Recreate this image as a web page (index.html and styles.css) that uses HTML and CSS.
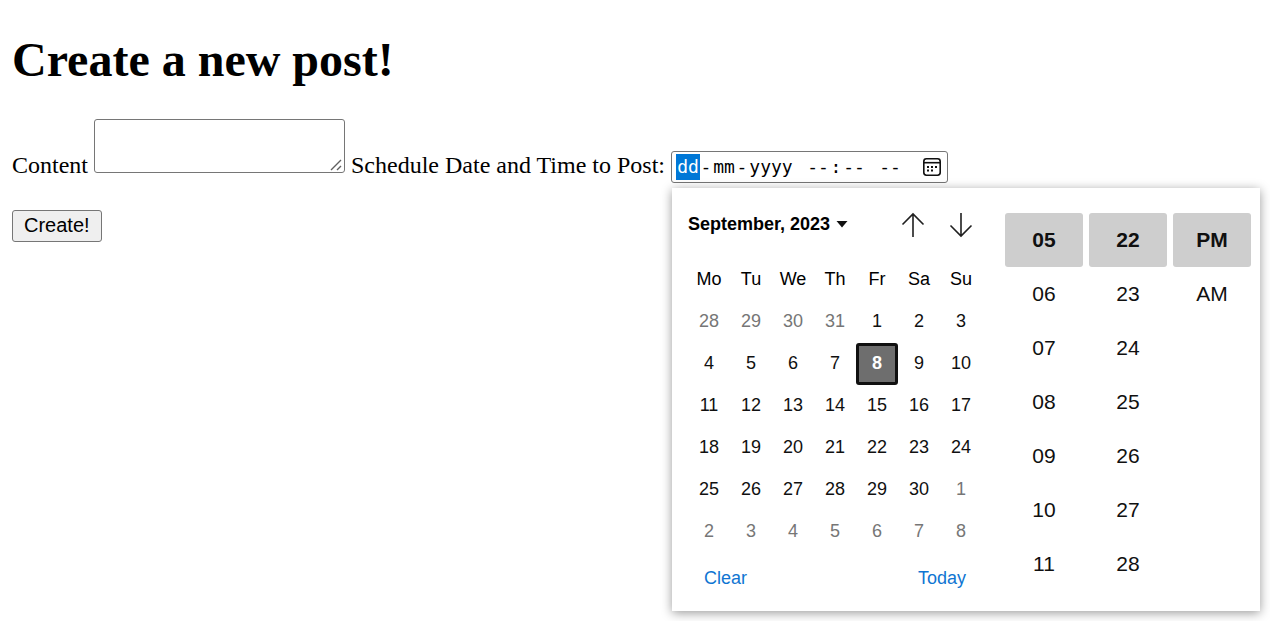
FILE: index.html
```
<!DOCTYPE html>
<html lang="en">
<head>
<meta charset="utf-8">
<title>Create a new post!</title>
<link rel="stylesheet" href="styles.css">
</head>
<body>
<h1>Create a new post!</h1>
<form>
  <div class="fields">
    <label for="content">Content</label>
    <textarea id="content" class="content"></textarea>
    <label for="day">Schedule Date and Time to Post:</label>
    <span class="picker">
      <span class="datetime">
        <input id="day" class="part active" aria-label="Day" value="dd"><span class="sep">-</span><input class="part" aria-label="Month" value="mm"><span class="sep">-</span><input class="part year" aria-label="Year" value="yyyy"><span class="sep"></span><input class="part" aria-label="Hours" value="--"><span class="sep">:</span><input class="part" aria-label="Minutes" value="--"><span class="sep"></span><input class="part" aria-label="AM/PM" value="--">
        <button type="button" class="toggle" aria-label="Show date picker">
          <svg width="20" height="20" viewBox="0 0 20 20" fill="none" stroke="#101010" stroke-width="1.6"><rect x="1.8" y="1.8" width="16.4" height="16.4" rx="2.6"/><path d="M2 5.7h16"/><path d="M5 10h2m2 0h2m2 0h2M5 13.500h2m2 0h2" stroke-width="2"/></svg>
        </button>
      </span>
      <span class="popup">
        <span class="calendar">
          <span class="head">
            <button type="button" class="month">September, 2023 <svg width="12" height="7" viewBox="0 0 12 7"><path d="M.5 0h11L6 6.5z" fill="#101010"/></svg></button>
            <button type="button" class="arrow" aria-label="Previous month"><svg width="24" height="26" viewBox="0 0 24 26" fill="none" stroke="#202020" stroke-width="1.6"><path d="M12 25V2M1.500 12.500 12 2l10.500 10.500"/></svg></button>
            <button type="button" class="arrow" aria-label="Next month"><svg width="24" height="26" viewBox="0 0 24 26" fill="none" stroke="#202020" stroke-width="1.6"><path d="M12 1v23M1.500 13.500 12 24l10.500-10.500"/></svg></button>
          </span>
          <table class="days">
            <thead><tr><th>Mo</th><th>Tu</th><th>We</th><th>Th</th><th>Fr</th><th>Sa</th><th>Su</th></tr></thead>
            <tbody id="weeks"></tbody>
          </table>
          <span class="foot">
            <button type="button" class="link">Clear</button>
            <button type="button" class="link">Today</button>
          </span>
        </span>
        <span class="time">
          <span class="column">
            <button type="button" class="option chosen">05</button><button type="button" class="option">06</button><button type="button" class="option">07</button><button type="button" class="option">08</button><button type="button" class="option">09</button><button type="button" class="option">10</button><button type="button" class="option">11</button>
          </span>
          <span class="column">
            <button type="button" class="option chosen">22</button><button type="button" class="option">23</button><button type="button" class="option">24</button><button type="button" class="option">25</button><button type="button" class="option">26</button><button type="button" class="option">27</button><button type="button" class="option">28</button>
          </span>
          <span class="column">
            <button type="button" class="option chosen">PM</button><button type="button" class="option">AM</button>
          </span>
        </span>
      </span>
    </span>
  </div>
  <button type="button" class="create">Create!</button>
</form>
<script src="calendar.js"></script>
</body>
</html>
```

FILE: styles.css
```
body {
  box-sizing: border-box;
  min-height: 100vh;
  margin: 0;
  padding: 32px 0 0 12px;
  background: #fff;
  color: #000;
  font: 24px "Liberation Serif", "Times New Roman", serif;
}

h1 {
  margin: 0 0 32px;
  font-size: 48px;
  line-height: 55px;
}

button {
  margin: 0;
  padding: 0;
  border: 0;
  background: none;
  color: #101010;
  font: 18px "Liberation Sans", Arial, sans-serif;
}

.fields {
  margin-bottom: 27px;
}

.content {
  box-sizing: border-box;
  width: 251px;
  height: 54px;
  margin: 0;
  border: 1px solid #767676;
  border-radius: 3px;
}

.content::-webkit-resizer {
  background: url("data:image/svg+xml,%3Csvg xmlns='http://www.w3.org/2000/svg' width='15' height='15' viewBox='0 0 15 15'%3E%3Cpath d='M2 13 12 3M8 13l4-4' stroke='%23606060' stroke-width='1.4'/%3E%3C/svg%3E") no-repeat right bottom;
}

.picker {
  display: inline-block;
  position: relative;
}

.datetime {
  display: inline-flex;
  align-items: center;
  box-sizing: border-box;
  height: 32px;
  padding: 0 5px 0 4px;
  border: 1px solid #767676;
  border-radius: 3px;
  font: 18px "DejaVu Sans Mono", monospace;
}

.part {
  box-sizing: border-box;
  width: 24px;
  height: 26px;
  padding: 0;
  border: 0;
  outline: 0;
  background: none;
  color: #000;
  font: inherit;
  text-align: center;
}

.year {
  width: 46px;
}

.active {
  background: #0078d7;
  color: #fff;
}

.sep {
  width: 12px;
  text-align: center;
}

.toggle {
  display: flex;
  margin-left: 20px;
}

.popup {
  position: absolute;
  top: 37px;
  left: 1px;
  display: flex;
  gap: 20px;
  padding: 12px 9px 20px 16px;
  background: #fff;
  box-shadow: 0 2px 10px rgba(0, 0, 0, 0.4);
}

.calendar {
  display: flex;
  flex-direction: column;
  width: 297px;
}

.head {
  display: flex;
  align-items: center;
  height: 50px;
  margin-bottom: 9px;
}

.month {
  display: flex;
  align-items: center;
  gap: 6px;
  margin-right: auto;
  color: #000;
  font-weight: bold;
  white-space: nowrap;
}

.arrow {
  display: flex;
  align-items: center;
  justify-content: center;
  width: 48px;
  height: 48px;
}

.days {
  width: 294px;
  border-collapse: collapse;
  table-layout: fixed;
  font: 18px "Liberation Sans", Arial, sans-serif;
}

.days th,
.days td {
  height: 42px;
  padding: 0;
  font-weight: normal;
  text-align: center;
}

.day {
  display: block;
  box-sizing: border-box;
  width: 42px;
  height: 42px;
}

.other {
  color: #767676;
}

.selected {
  border: 3px solid #101010;
  border-radius: 3px;
  background: #6e6e6e;
  color: #fff;
  font-weight: bold;
}

.foot {
  display: flex;
  justify-content: space-between;
  padding: 14px 19px 0 16px;
}

.link {
  height: 24px;
  color: #0f75d2;
}

.time {
  display: flex;
  gap: 6px;
  padding-top: 13px;
}

.column {
  display: flex;
  flex-direction: column;
}

.option {
  width: 78px;
  height: 54px;
  border-radius: 3px;
  font-size: 21px;
}

.chosen {
  background: #cecece;
  font-weight: bold;
}

.create {
  display: block;
  height: 32px;
  padding: 0 11px;
  border: 1px solid #767676;
  border-radius: 3px;
  background: #efefef;
  color: #000;
  font-size: 20px;
}
```

FILE: calendar.js
```
// Six weeks, Monday first, beginning on 28 August 2023.
const weeks = document.getElementById("weeks");
for (let w = 0; w < 6; w++) {
  const row = weeks.insertRow();
  for (let d = 0; d < 7; d++) {
    const date = new Date(2023, 7, 28 + w * 7 + d);
    const inMonth = date.getMonth() === 8;
    const button = document.createElement("button");
    button.type = "button";
    button.className = "day";
    if (!inMonth) button.classList.add("other");
    if (inMonth && date.getDate() === 8) button.classList.add("selected");
    button.textContent = date.getDate();
    row.insertCell().append(button);
  }
}
```
